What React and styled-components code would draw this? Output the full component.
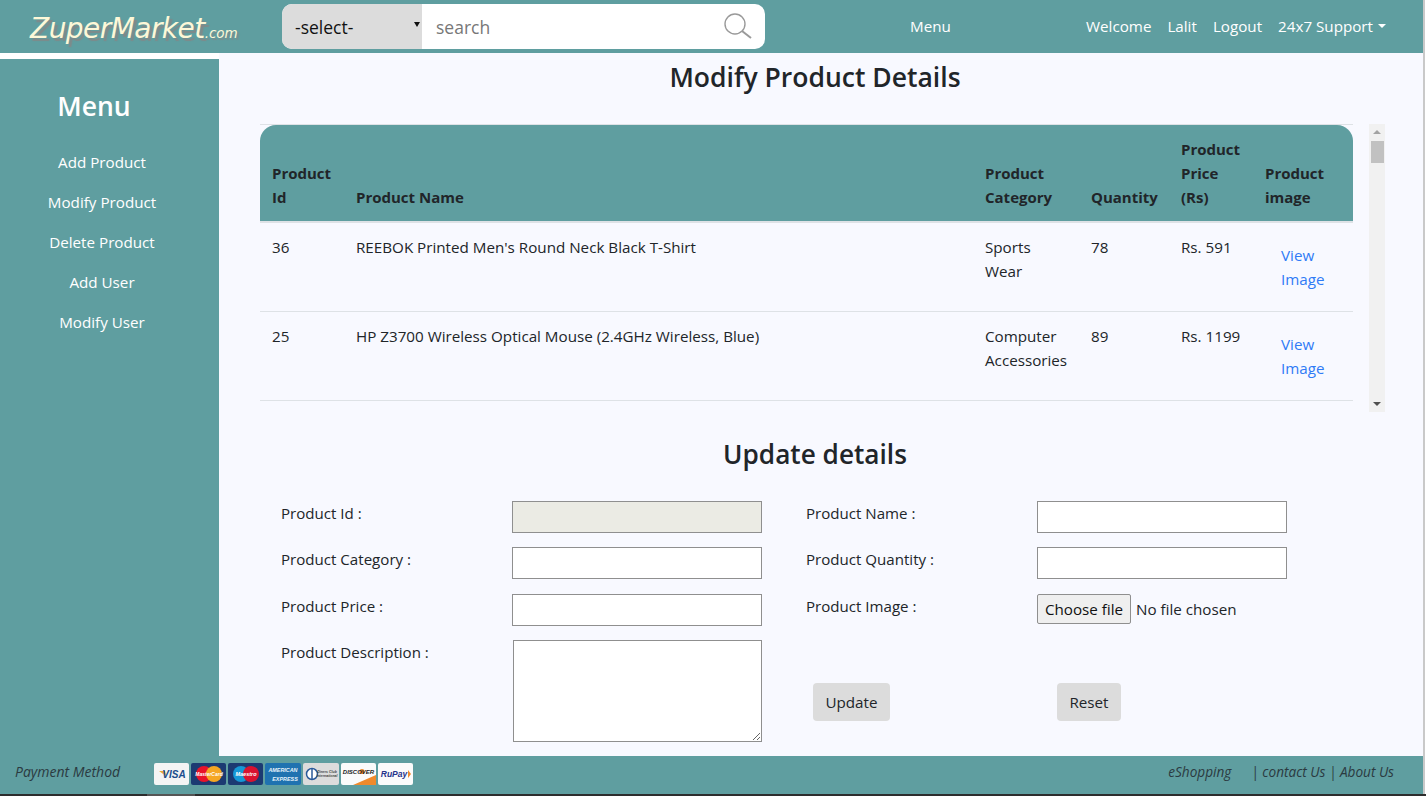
import React from "react";
import styled, { createGlobalStyle } from "styled-components";

const Global = createGlobalStyle`
  html, body { margin: 0; padding: 0; height: 796px; overflow: hidden; background: #fff; }
  body { font-family: "Open Sans", "Noto Sans", sans-serif; font-size: 15.2px; color: #212529; }
  #root { height: 796px; }
  * { box-sizing: border-box; }
`;

const teal = "#5f9ea0";

const Page = styled.div`
  width: 1423px;
  height: 794px;
  display: flex;
  flex-direction: column;
  position: relative;
`;
const PageEdge = styled.div`
  position: absolute;
  top: 0;
  left: 1423px;
  width: 2px;
  height: 796px;
  background: #c9c9c9;
`;
const BottomEdge = styled.div`
  position: absolute;
  top: 794px;
  left: 0;
  width: 1426px;
  height: 2px;
  background: #2d2d2d;
  &::after {
    content: "";
    position: absolute;
    left: 147px;
    width: 48px;
    height: 2px;
    background: #555;
  }
`;
const Header = styled.header`
  height: 53px;
  flex: none;
  background: ${teal};
  display: flex;
  align-items: center;
  padding-left: 30px;
`;
const Logo = styled.div`
  width: 252px;
  flex: none;
  font-family: "DejaVu Sans", sans-serif;
  font-style: italic;
  font-size: 28px;
  letter-spacing: -0.55px;
  color: #fdf8d8;
  text-shadow: 3px 3px 1px #7f8a8a;
  white-space: nowrap;
  margin-top: 3px;
  small {
    font-size: 13.5px;
    letter-spacing: 0;
    text-shadow: 2px 2px 1px #7f8a8a;
  }
`;
const Search = styled.div`
  width: 483px;
  height: 45px;
  flex: none;
  display: flex;
  border-radius: 10px;
  overflow: hidden;
  background: #fff;
  position: relative;
`;
const SelectBox = styled.div`
  width: 140px;
  flex: none;
  background: #dcdcdc;
  color: #111;
  font-size: 17.5px;
  display: flex;
  align-items: center;
  justify-content: space-between;
  padding: 0 2px 0 13px;
  &::after {
    content: "";
    border-left: 3px solid transparent;
    border-right: 3px solid transparent;
    border-top: 5px solid #111;
    margin-top: -4px;
  }
`;
const SearchInput = styled.input`
  flex: 1;
  min-width: 0;
  border: 0;
  outline: 0;
  background: transparent;
  font: 17.5px "Open Sans", sans-serif;
  padding: 0 14px;
  &::placeholder { color: #777; opacity: 1; }
`;
const SearchIcon = styled.svg`
  position: absolute;
  right: 12px;
  top: 9px;
`;
const TopNav = styled.nav`
  flex: 1;
  display: flex;
  align-items: center;
  color: #fff;
  font-size: 15.2px;
  padding-right: 37px;
  margin-top: -1px;
`;
const NavMenu = styled.span`
  margin-left: 145px;
  margin-right: auto;
`;
const NavItem = styled.span`
  margin-left: 16px;
  display: inline-flex;
  align-items: center;
  white-space: nowrap;
  ${(p) => p.$caret && `
    &::after {
      content: "";
      margin-left: 5px;
      border-left: 4px solid transparent;
      border-right: 4px solid transparent;
      border-top: 4.5px solid #fff;
    }
  `}
`;
const Body = styled.div`
  flex: 1;
  min-height: 0;
  display: flex;
  padding-top: 6px;
`;
const Sidebar = styled.aside`
  width: 219px;
  flex: none;
  background: ${teal};
  color: #fff;
  padding-top: 29px;
`;
const SideTitle = styled.h3`
  margin: 0 0 18px;
  font-size: 26.5px;
  line-height: 36px;
  font-weight: 600;
  text-align: center;
  padding-right: 31px;
`;
const SideLink = styled.div`
  height: 40px;
  line-height: 40px;
  text-align: center;
  font-size: 15.2px;
  padding-right: 15px;
`;
const Main = styled.main`
  flex: 1;
  min-width: 0;
  background: #f8f9ff;
  margin-top: -6px;
  padding: 5px 0 0 41px;
  overflow: hidden;
`;
const Title = styled.h3`
  margin: 0;
  width: 1110px;
  text-align: center;
  font-size: ${(p) => (p.$second ? "26.2px" : "26.5px")};
  line-height: 38px;
  font-weight: 600;
  ${(p) => p.$second ? "margin-top: 23px; margin-bottom: 28px;" : "margin-bottom: 28px; height: 38px;"}
`;
const TableArea = styled.div`
  display: flex;
  height: 288px;
`;
const TableClip = styled.div`
  width: 1093px;
  flex: none;
  border-top: 1px solid #dee2e6;
  overflow: hidden;
`;
const Table = styled.table`
  width: 1093px;
  table-layout: fixed;
  border-collapse: separate;
  border-spacing: 0;
  font-size: 15.2px;
  line-height: 24px;
`;
const Th = styled.th`
  background: ${teal};
  text-align: left;
  vertical-align: bottom;
  padding: 12px;
  font-weight: 700;
  font-size: 15px;
  border-bottom: 2px solid #dee2e6;
  &:first-child { border-top-left-radius: 16px; }
  &:last-child { border-top-right-radius: 16px; }
`;
const Td = styled.td`
  vertical-align: top;
  padding: 12px 12px 12px;
  height: 89px;
  border-bottom: 1px solid #dee2e6;
`;
const ViewLink = styled.a`
  display: block;
  width: 64px;
  margin: 8px 0 0 16px;
  color: #2f7bf6;
`;
const Scrollbar = styled.div`
  width: 16px;
  flex: none;
  margin-left: 16px;
  background: #f1f1f1;
  position: relative;
`;
const Arrow = styled.span`
  position: absolute;
  left: 4px;
  ${(p) => (p.$up ? "top: 6px;" : "bottom: 6px;")}
  border-left: 4px solid transparent;
  border-right: 4px solid transparent;
  ${(p) => (p.$up ? "border-bottom: 4px solid #a3a3a3;" : "border-top: 4px solid #505050;")}
`;
const Thumb = styled.span`
  position: absolute;
  left: 2px;
  top: 17px;
  width: 13px;
  height: 22px;
  background: #c1c1c1;
`;
const Form = styled.form`
  display: grid;
  grid-template-columns: 231px 294px 231px 250px;
  row-gap: 14.4px;
  padding-left: 21px;
`;
const Label = styled.label`
  display: block;
  font-size: 15.1px;
  line-height: 24px;
`;
const TextInput = styled.input`
  display: block;
  width: 250px;
  height: 32px;
  border: 1px solid #8f8f8f;
  background: ${(p) => (p.disabled ? "#ebebe4" : "#fff")};
  padding: 1px 2px;
`;
const FileRow = styled.label`
  display: flex;
  align-items: center;
  height: 30px;
  width: 250px;
  font-size: 15.2px;
  position: relative;
`;
const HiddenFile = styled.input`
  position: absolute;
  width: 1px;
  height: 1px;
  opacity: 0;
`;
const FileButton = styled.span`
  display: flex;
  align-items: center;
  justify-content: center;
  height: 30px;
  width: 94px;
  margin-right: 5px;
  border: 1px solid #8f8f8f;
  border-radius: 2px;
  background: #efefef;
  color: #111;
`;
const Area = styled.textarea`
  display: block;
  width: 249px;
  height: 102px;
  margin-left: 1px;
  border: 1px solid #8f8f8f;
  background: #fff;
`;
const ButtonCell = styled.div`
  grid-column: 3 / 5;
  display: flex;
  align-items: flex-end;
  padding: 0 0 21px 7px;
`;
const GreyButton = styled.button`
  height: 38px;
  width: ${(p) => p.$w}px;
  margin-right: ${(p) => p.$mr || 0}px;
  border: 0;
  border-radius: 4px;
  background: #dcdcdc;
  color: #212529;
  font: 15.2px "Open Sans", sans-serif;
  padding: 0;
`;
const Footer = styled.footer`
  height: 38px;
  flex: none;
  background: ${teal};
  display: flex;
  align-items: center;
  font-style: italic;
  font-size: 14px;
  color: #2b3a40;
  padding: 0 29px 7px 15px;
`;
const PayLabel = styled.span`
  width: 139px;
  flex: none;
`;
const Cards = styled.div`
  display: flex;
  gap: 2px;
  margin-top: 5px;
`;
const Card = styled.svg`
  display: block;
  flex: none;
`;
const FootRight = styled.div`
  margin-left: auto;
  display: flex;
  white-space: nowrap;
  gap: 20px;
  font-size: 13.6px;
`;

const CardShell = ({ w = 35, bg, children }) => (
  <Card width={w} height="22" viewBox={`0 0 ${w} 22`}>
    <rect x="0" y="0" width={w} height="22" rx="2" fill={bg} />
    {children}
  </Card>
);

const cardText = { fontFamily: "Liberation Sans, sans-serif", fontWeight: 700, textAnchor: "middle" };

const rows = [
  ["36", "REEBOK Printed Men's Round Neck Black T-Shirt", "Sports Wear", "78", "Rs. 591"],
  ["25", "HP Z3700 Wireless Optical Mouse (2.4GHz Wireless, Blue)", "Computer Accessories", "89", "Rs. 1199"],
];

export default function App() {
  return (
    <>
      <Global />
      <Page>
        <Header>
          <Logo>ZuperMarket<small>.com</small></Logo>
          <Search>
            <SelectBox>-select-</SelectBox>
            <SearchInput placeholder="search" />
            <SearchIcon width="30" height="27" viewBox="0 0 30 27" fill="none" stroke="#9a9a9a">
              <circle cx="12" cy="11" r="10" strokeWidth="1.4" />
              <path d="M19 18 L28 25" strokeWidth="2" />
            </SearchIcon>
          </Search>
          <TopNav>
            <NavMenu>Menu</NavMenu>
            <NavItem>Welcome</NavItem>
            <NavItem>Lalit</NavItem>
            <NavItem>Logout</NavItem>
            <NavItem $caret>24x7 Support</NavItem>
          </TopNav>
        </Header>
        <Body>
          <Sidebar>
            <SideTitle>Menu</SideTitle>
            <SideLink>Add Product</SideLink>
            <SideLink>Modify Product</SideLink>
            <SideLink>Delete Product</SideLink>
            <SideLink>Add User</SideLink>
            <SideLink>Modify User</SideLink>
          </Sidebar>
          <Main>
            <Title>Modify Product Details</Title>
            <TableArea>
              <TableClip>
                <Table>
                  <colgroup>
                    <col style={{ width: 84 }} />
                    <col style={{ width: 629 }} />
                    <col style={{ width: 106 }} />
                    <col style={{ width: 90 }} />
                    <col style={{ width: 84 }} />
                    <col style={{ width: 100 }} />
                  </colgroup>
                  <thead>
                    <tr>
                      <Th>Product Id</Th>
                      <Th>Product Name</Th>
                      <Th>Product Category</Th>
                      <Th>Quantity</Th>
                      <Th>Product Price (Rs)</Th>
                      <Th>Product image</Th>
                    </tr>
                  </thead>
                  <tbody>
                    {rows.map((r) => (
                      <tr key={r[0]}>
                        {r.map((c, i) => (
                          <Td key={i}>{c}</Td>
                        ))}
                        <Td><ViewLink>View Image</ViewLink></Td>
                      </tr>
                    ))}
                  </tbody>
                </Table>
              </TableClip>
              <Scrollbar>
                <Arrow $up />
                <Thumb />
                <Arrow />
              </Scrollbar>
            </TableArea>
            <Title $second>Update details</Title>
            <Form>
              <Label>Product Id :</Label>
              <div><TextInput disabled /></div>
              <Label>Product Name :</Label>
              <div><TextInput /></div>
              <Label>Product Category :</Label>
              <div><TextInput /></div>
              <Label>Product Quantity :</Label>
              <div><TextInput /></div>
              <Label>Product Price :</Label>
              <div><TextInput /></div>
              <Label>Product Image :</Label>
              <FileRow>
                <HiddenFile type="file" />
                <FileButton>Choose file</FileButton>
                No file chosen
              </FileRow>
              <Label>Product Description :</Label>
              <div><Area /></div>
              <ButtonCell>
                <GreyButton type="button" $w={77} $mr={167}>Update</GreyButton>
                <GreyButton type="button" $w={64}>Reset</GreyButton>
              </ButtonCell>
            </Form>
          </Main>
        </Body>
        <Footer>
          <PayLabel>Payment Method</PayLabel>
          <Cards>
            <CardShell bg="#f4f4f4">
              <path d="M5 8 L11 8 L12 13 Z" fill="#e9a92c" />
              <text x="20" y="15" fontSize="10" fill="#1a4d8c" fontStyle="italic" style={cardText}>VISA</text>
            </CardShell>
            <CardShell bg="#1c3a72">
              <circle cx="13" cy="11" r="8" fill="#e8132a" />
              <circle cx="23" cy="11" r="8" fill="#f5a623" />
              <text x="18" y="13" fontSize="5" fill="#fff" fontStyle="italic" style={cardText}>MasterCard</text>
            </CardShell>
            <CardShell bg="#1c3a72">
              <circle cx="13" cy="11" r="8" fill="#1598d6" />
              <circle cx="23" cy="11" r="8" fill="#d9122f" />
              <text x="18" y="13" fontSize="5.5" fill="#fff" fontStyle="italic" style={cardText}>Maestro</text>
            </CardShell>
            <CardShell bg="#1f72b0" w={36}>
              <text x="18" y="9" fontSize="5.4" fill="#e8f2fa" style={cardText}>AMERICAN</text>
              <text x="20" y="18" fontSize="5.4" fill="#e8f2fa" style={cardText}>EXPRESS</text>
            </CardShell>
            <CardShell bg="#dcdcdc" w={36}>
              <circle cx="9" cy="11" r="5.5" fill="#fff" stroke="#2a5a9a" strokeWidth="1.5" />
              <path d="M9 6v10" stroke="#2a5a9a" strokeWidth="1.5" />
              <text x="24" y="10" fontSize="3.5" fill="#444" style={cardText}>Diners Club</text>
              <text x="24" y="14" fontSize="3.5" fill="#444" style={cardText}>International</text>
            </CardShell>
            <CardShell bg="#fbfbfb">
              <path d="M12 22 L35 12 V22 Z" fill="#f08a2c" />
              <circle cx="21" cy="8.5" r="2.6" fill="#f08a2c" />
              <text x="17.5" y="11" fontSize="6" fill="#222" style={cardText}>DISCOVER</text>
            </CardShell>
            <CardShell bg="#fbfbfb">
              <text x="16" y="14" fontSize="8.5" fill="#27348b" fontStyle="italic" style={cardText}>RuPay</text>
              <path d="M30 7 L33 11 L30 15 Z" fill="#f08a2c" />
            </CardShell>
          </Cards>
          <FootRight>
            <span>eShopping</span>
            <span>| contact Us | About Us</span>
          </FootRight>
        </Footer>
        <PageEdge />
      </Page>
      <BottomEdge />
    </>
  );
}
